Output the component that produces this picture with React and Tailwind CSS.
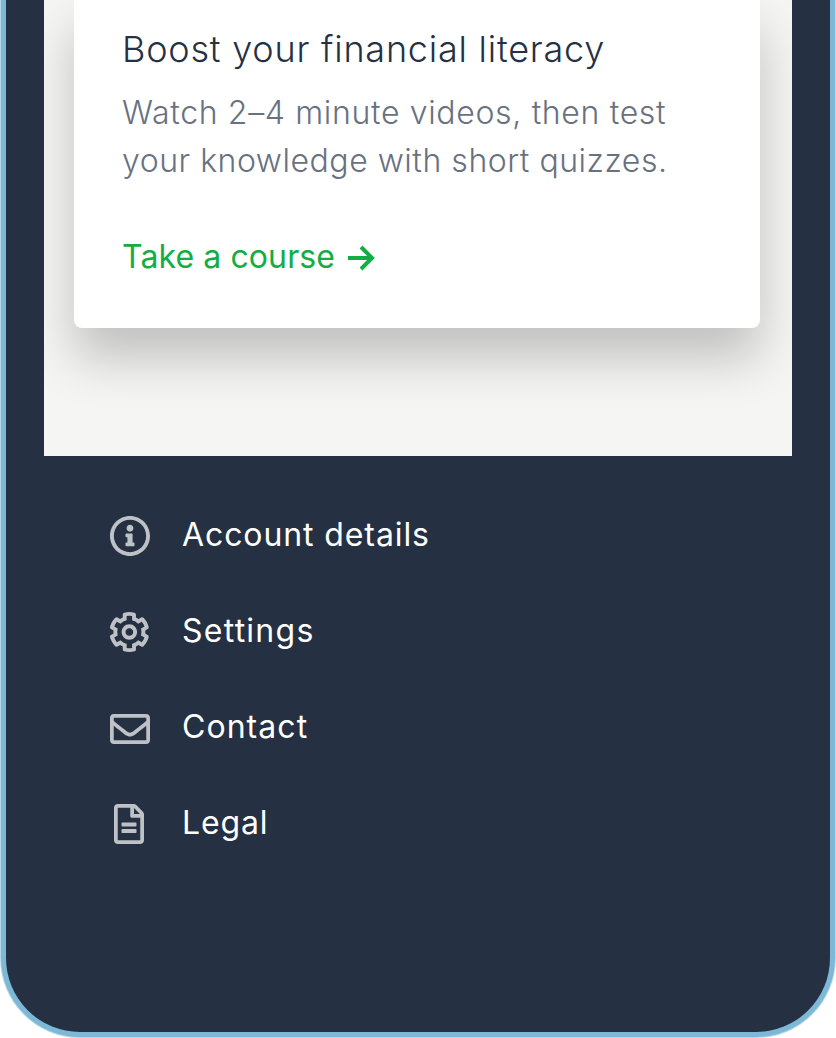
import React from "react";
import { FaRegEnvelope, FaRegFileAlt } from "react-icons/fa";

function InfoIcon() {
  return (
    <svg viewBox="8 8 496 496" fill="currentColor" className="size-10">
      <path d="M256 8C119.043 8 8 119.083 8 256c0 136.997 111.043 248 248 248s248-111.003 248-248C504 119.083 392.957 8 256 8zm0 448c-110.532 0-200-89.431-200-200 0-110.495 89.472-200 200-200 110.491 0 200 89.471 200 200 0 110.53-89.431 200-200 200zm0-338c23.196 0 42 18.804 42 42s-18.804 42-42 42-42-18.804-42-42 18.804-42 42-42zm56 254c0 6.627-5.373 12-12 12h-88c-6.627 0-12-5.373-12-12v-24c0-6.627 5.373-12 12-12h12v-64h-12c-6.627 0-12-5.373-12-12v-24c0-6.627 5.373-12 12-12h64c6.627 0 12 5.373 12 12v100h12c6.627 0 12 5.373 12 12v24z" />
    </svg>
  );
}

function CogIcon() {
  return (
    <svg viewBox="16 8 496 496" fill="currentColor" className="size-10">
      <path d="M452.515 237l31.843-18.382c9.426-5.441 13.996-16.542 11.177-27.054-11.404-42.531-33.842-80.547-64.058-110.797-7.68-7.688-19.575-9.246-28.985-3.811l-31.785 18.358a196.276 196.276 0 0 0-32.899-19.02V39.541a24.016 24.016 0 0 0-17.842-23.206c-41.761-11.107-86.117-11.121-127.93-.001-10.519 2.798-17.844 12.321-17.844 23.206v36.753a196.276 196.276 0 0 0-32.899 19.02l-31.785-18.358c-9.41-5.435-21.305-3.877-28.985 3.811-30.216 30.25-52.654 68.265-64.058 110.797-2.819 10.512 1.751 21.613 11.177 27.054L59.485 237a197.715 197.715 0 0 0 0 37.999l-31.843 18.382c-9.426 5.441-13.996 16.542-11.177 27.054 11.404 42.531 33.842 80.547 64.058 110.797 7.68 7.688 19.575 9.246 28.985 3.811l31.785-18.358a196.202 196.202 0 0 0 32.899 19.019v36.753a24.016 24.016 0 0 0 17.842 23.206c41.761 11.107 86.117 11.122 127.93.001 10.519-2.798 17.844-12.321 17.844-23.206v-36.753a196.34 196.34 0 0 0 32.899-19.019l31.785 18.358c9.41 5.435 21.305 3.877 28.985-3.811 30.216-30.25 52.654-68.266 64.058-110.797 2.819-10.512-1.751-21.613-11.177-27.054L452.515 275c1.22-12.65 1.22-25.35 0-38zm-52.679 63.019l43.819 25.289a200.138 200.138 0 0 1-33.849 58.528l-43.829-25.309c-31.984 27.397-36.659 30.077-76.168 44.029v50.599a200.917 200.917 0 0 1-67.618 0v-50.599c-39.504-13.95-44.196-16.642-76.168-44.029l-43.829 25.309a200.15 200.15 0 0 1-33.849-58.528l43.819-25.289c-7.63-41.299-7.634-46.719 0-88.038l-43.819-25.289c7.85-21.229 19.31-41.049 33.849-58.529l43.829 25.309c31.984-27.397 36.66-30.078 76.168-44.029V58.845a200.917 200.917 0 0 1 67.618 0v50.599c39.504 13.95 44.196 16.642 76.168 44.029l43.829-25.309a200.143 200.143 0 0 1 33.849 58.529l-43.819 25.289c7.631 41.3 7.634 46.718 0 88.037zM256 160c-52.935 0-96 43.065-96 96s43.065 96 96 96 96-43.065 96-96-43.065-96-96-96zm0 144c-26.468 0-48-21.532-48-48 0-26.467 21.532-48 48-48s48 21.533 48 48c0 26.468-21.532 48-48 48z" />
    </svg>
  );
}

const links = [
  { label: "Account details", icon: <InfoIcon />, spacing: "tracking-[0.9px]" },
  { label: "Settings", icon: <CogIcon />, spacing: "tracking-[1.25px]" },
  { label: "Contact", icon: <FaRegEnvelope className="size-10 translate-y-px" />, spacing: "tracking-[1.05px]" },
  { label: "Legal", icon: <FaRegFileAlt className="size-10 -translate-x-px" />, spacing: "tracking-[0.85px]" },
];

export default function App() {
  return (
    <div className="h-[1038px] w-[836px] overflow-hidden bg-white px-px font-['Inter',sans-serif]">
      <div className="h-[1037px] rounded-b-[79px] border-x-[5px] border-b-[5px] border-[#7db8d7] bg-[#253143] px-[38px] shadow-[0_0_0_1px_rgba(125,184,215,0.55)]">
        <main className="h-[456px] overflow-hidden bg-[#f5f5f4] pr-8 pl-[30px]">
          <section className="h-[328px] rounded-b-lg bg-white px-12 pt-[25px] shadow-[0_30px_50px_rgba(0,0,0,0.215)]">
            <h2 className="whitespace-nowrap text-[36px] leading-[48px] font-light tracking-[0.78px] text-[#253143]">
              Boost your financial literacy
            </h2>
            <p className="mt-4 whitespace-nowrap text-[32px] leading-[48px] font-light text-[#687180]">
              <span className="tracking-[0.66px]">Watch 2–4 minute videos, then test</span>
              <br />
              <span className="tracking-[0.53px]">your knowledge with short quizzes.</span>
            </p>
            <a className="mt-12 flex items-center text-[32px] leading-[48px] text-[#12ad43]">
              <span className="w-[226px] whitespace-nowrap tracking-[0.1px]">Take a course</span>
              <svg viewBox="0 0 27 26" className="h-[26px] w-[27px] translate-y-px" fill="none" stroke="currentColor" strokeWidth="4">
                <path d="M0 13H24M13 2L24 13L13 24" />
              </svg>
            </a>
          </section>
        </main>
        <nav className="flex flex-col gap-12 px-[66px] pt-[55px]">
          {links.map(({ label, icon, spacing }) => (
            <a key={label} className="flex h-12 items-center gap-8 text-[32px] leading-[48px] text-white">
              <span className="flex size-10 translate-y-px items-center justify-center text-[#bec1c6]">{icon}</span>
              <span className={"whitespace-nowrap " + spacing}>{label}</span>
            </a>
          ))}
        </nav>
      </div>
    </div>
  );
}
